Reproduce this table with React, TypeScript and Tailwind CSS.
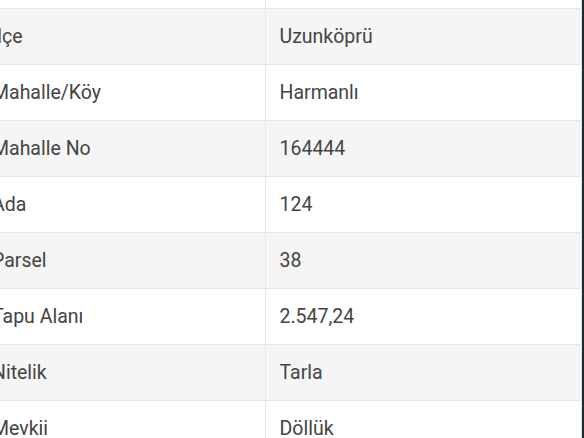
const rows: [string, string][] = [
  ["İlçe", "Uzunköprü"],
  ["Mahalle/Köy", "Harmanlı"],
  ["Mahalle No", "164444"],
  ["Ada", "124"],
  ["Parsel", "38"],
  ["Tapu Alanı", "2.547,24"],
  ["Nitelik", "Tarla"],
  ["Mevkii", "Döllük"],
];

export default function App() {
  return (
    <div className="flex h-[438px] w-[584px] overflow-hidden bg-white font-['Roboto',sans-serif]">
      <div className="-ml-[24px] flex-1">
        <table className="w-full border-collapse text-[19.5px] text-[#444444]">
          <tbody>
            <tr className="h-[8px] bg-white">
              <td className="w-[289px] border-r border-b border-[#e6e6e6]" />
              <td className="border-b border-r border-[#e6e6e6]" />
            </tr>
            {rows.map(([k, v], i) => (
              <tr key={k} className={i % 2 === 0 ? "h-[56px] bg-[#f5f5f5]" : "h-[56px] bg-white"}>
                <td className="border-r border-b border-[#e6e6e6] px-4 pt-px">{k}</td>
                <td className="border-r border-b border-[#e6e6e6] px-[14px] pt-px">{v}</td>
              </tr>
            ))}
          </tbody>
        </table>
      </div>
      <div className="w-[2px] shrink-0 bg-[#1e2b2b]" />
    </div>
  );
}
